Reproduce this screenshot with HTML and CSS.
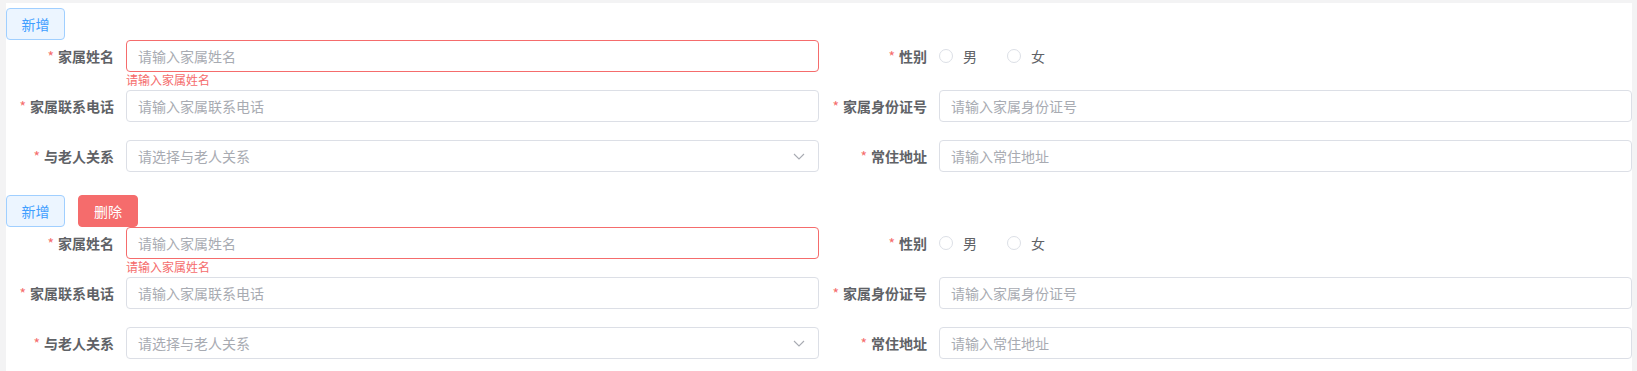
FILE: index.html
```html
<!DOCTYPE html>
<html lang="zh-CN">
<head>
    <meta charset="UTF-8">
    <meta name="viewport" content="width=device-width, initial-scale=1.0">
    <title>家属信息</title>
    <link rel="stylesheet" href="styles.css">
</head>
<body>

    <div class="panel">

        <!-- 家属 1 -->
        <div class="family-block">
            <div class="block-actions">
                <button class="btn btn-add">新增</button>
            </div>
            <div class="form-grid">
                <div class="form-item is-error">
                    <label class="form-label required">家属姓名</label>
                    <div class="form-content">
                        <input class="text-input" type="text" placeholder="请输入家属姓名">
                        <div class="form-error">请输入家属姓名</div>
                    </div>
                </div>
                <div class="form-item">
                    <label class="form-label required">性别</label>
                    <div class="form-content radio-group">
                        <label class="radio"><span class="radio-circle"></span><span class="radio-text">男</span></label>
                        <label class="radio"><span class="radio-circle"></span><span class="radio-text">女</span></label>
                    </div>
                </div>
                <div class="form-item">
                    <label class="form-label required">家属联系电话</label>
                    <div class="form-content">
                        <input class="text-input" type="text" placeholder="请输入家属联系电话">
                    </div>
                </div>
                <div class="form-item">
                    <label class="form-label required">家属身份证号</label>
                    <div class="form-content">
                        <input class="text-input" type="text" placeholder="请输入家属身份证号">
                    </div>
                </div>
                <div class="form-item">
                    <label class="form-label required">与老人关系</label>
                    <div class="form-content">
                        <div class="select">
                            <span class="select-placeholder">请选择与老人关系</span>
                            <svg class="select-arrow" width="12" height="12" viewBox="0 0 12 12">
                                <path d="M1 4 L6 9 L11 4" fill="none" stroke="#a8abb2" stroke-width="1.1"/>
                            </svg>
                        </div>
                    </div>
                </div>
                <div class="form-item">
                    <label class="form-label required">常住地址</label>
                    <div class="form-content">
                        <input class="text-input" type="text" placeholder="请输入常住地址">
                    </div>
                </div>
            </div>
        </div>

        <!-- 家属 2 -->
        <div class="family-block">
            <div class="block-actions">
                <button class="btn btn-add">新增</button>
                <button class="btn btn-delete">删除</button>
            </div>
            <div class="form-grid">
                <div class="form-item is-error">
                    <label class="form-label required">家属姓名</label>
                    <div class="form-content">
                        <input class="text-input" type="text" placeholder="请输入家属姓名">
                        <div class="form-error">请输入家属姓名</div>
                    </div>
                </div>
                <div class="form-item">
                    <label class="form-label required">性别</label>
                    <div class="form-content radio-group">
                        <label class="radio"><span class="radio-circle"></span><span class="radio-text">男</span></label>
                        <label class="radio"><span class="radio-circle"></span><span class="radio-text">女</span></label>
                    </div>
                </div>
                <div class="form-item">
                    <label class="form-label required">家属联系电话</label>
                    <div class="form-content">
                        <input class="text-input" type="text" placeholder="请输入家属联系电话">
                    </div>
                </div>
                <div class="form-item">
                    <label class="form-label required">家属身份证号</label>
                    <div class="form-content">
                        <input class="text-input" type="text" placeholder="请输入家属身份证号">
                    </div>
                </div>
                <div class="form-item">
                    <label class="form-label required">与老人关系</label>
                    <div class="form-content">
                        <div class="select">
                            <span class="select-placeholder">请选择与老人关系</span>
                            <svg class="select-arrow" width="12" height="12" viewBox="0 0 12 12">
                                <path d="M1 4 L6 9 L11 4" fill="none" stroke="#a8abb2" stroke-width="1.1"/>
                            </svg>
                        </div>
                    </div>
                </div>
                <div class="form-item">
                    <label class="form-label required">常住地址</label>
                    <div class="form-content">
                        <input class="text-input" type="text" placeholder="请输入常住地址">
                    </div>
                </div>
            </div>
        </div>

    </div>

</body>
</html>
```

FILE: styles.css
```css
/* Basic Reset */
* {
    margin: 0;
    padding: 0;
    box-sizing: border-box;
}

body {
    font-family: "Noto Sans CJK SC", "Noto Sans", "Liberation Sans", sans-serif;
    font-size: 14px;
    color: #606266;
    background-color: #f3f3f4;
    padding: 3px 5px 0 6px;
    height: 371px;
    overflow: hidden;
}

.panel {
    background-color: #ffffff;
    min-height: 368px;
}

/* one family member */
.family-block {
    padding-top: 5px;
}

.block-actions {
    display: flex;
    gap: 13px;
}

.btn {
    font-family: inherit;
    font-size: 14px;
    line-height: 1;
    height: 32px;
    padding: 0;
    white-space: nowrap;
    text-align: center;
    border-radius: 4px;
    cursor: pointer;
}

.btn-add {
    width: 59px;
    color: #409eff;
    background-color: #ecf5ff;
    border: 1px solid #a0cfff;
}

.btn-delete {
    width: 60px;
    color: #ffffff;
    background-color: #f56c6c;
    border: 1px solid #f56c6c;
}

/* two column form */
.form-grid {
    display: grid;
    grid-template-columns: 1fr 1fr;
}

.form-item {
    display: flex;
    margin-bottom: 18px;
}

.form-label {
    width: 120px;
    flex-shrink: 0;
    padding-right: 12px;
    text-align: right;
    line-height: 32px;
    font-weight: bold;
    color: #606266;
}

.form-label.required::before {
    content: "*";
    color: #f56c6c;
    margin-right: 4px;
    font-weight: normal;
}

.form-content {
    flex: 1;
    position: relative;
    min-width: 0;
}

.text-input {
    display: block;
    width: 100%;
    height: 32px;
    padding: 0 11px;
    font-family: inherit;
    font-size: 14px;
    color: #606266;
    border: 1px solid #dcdfe6;
    border-radius: 4px;
    outline: none;
}

.text-input::placeholder {
    color: #a8abb2;
}

.is-error .text-input {
    border-color: #f56c6c;
}

.form-error {
    position: absolute;
    top: 100%;
    left: 0;
    padding-top: 2px;
    font-size: 12px;
    line-height: 1;
    color: #f56c6c;
}

/* select */
.select {
    display: flex;
    align-items: center;
    justify-content: space-between;
    height: 32px;
    padding: 0 13px 0 11px;
    border: 1px solid #dcdfe6;
    border-radius: 4px;
}

.select-placeholder {
    color: #a8abb2;
}

/* radio */
.radio-group {
    display: flex;
    align-items: center;
    height: 32px;
}

.radio {
    display: flex;
    align-items: center;
    margin-right: 30px;
    cursor: pointer;
}

.radio-circle {
    width: 14px;
    height: 14px;
    border: 1px solid #dcdfe6;
    border-radius: 50%;
}

.radio-text {
    padding-left: 10px;
    color: #606266;
}
```
